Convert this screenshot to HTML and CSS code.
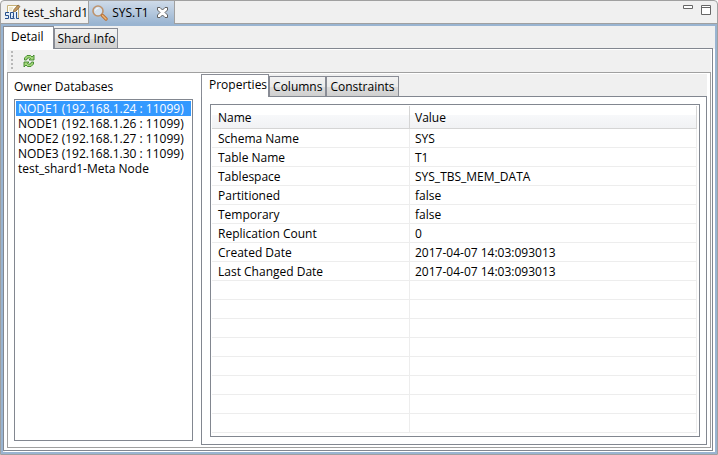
FILE: index.html
```html
<!DOCTYPE html>
<html lang="en">
<head>
<meta charset="utf-8">
<title>SYS.T1</title>
<link rel="stylesheet" href="styles.css">
</head>
<body>
<main class="editor">
  <header class="editor-tabs">
    <button class="editor-tab">
      <svg class="icon" width="16" height="16" viewBox="0 0 16 16" aria-hidden="true">
        <path d="M2.500 1.500h11v13h-11z" fill="#fffdf2" stroke="#c5b078"/>
        <path d="M4 4h4M4 6h3" stroke="#e0d4ae"/>
        <path d="M13 1l2 1.500-4 4.500-3 1.500 1-3z" fill="#c99a5c" stroke="#7d6340" stroke-width=".8"/>
        <path d="M0 8h13v7H0z" fill="#e4eef8"/>
        <path d="M4 8.500H.5v3h3v3H0M5.500 8.500h3v6h-3zM7.500 12.500l2 2.500M11.500 8v6.500H14" fill="none" stroke="#28508c"/>
      </svg>
      <span>test_shard1</span>
    </button>
    <button class="editor-tab editor-tab-active">
      <svg class="icon" width="16" height="16" viewBox="0 0 16 16" aria-hidden="true">
        <circle cx="6" cy="6" r="5" fill="#d3e0ee" stroke="#bd936e" stroke-width="1.600"/>
        <path d="M3.500 5.500a3 3 0 0 1 3-2.500" fill="none" stroke="#fff"/>
        <path d="M10.500 10.500l3.500 3.500" stroke="#b8733a" stroke-width="3.400" stroke-linecap="round"/>
        <path d="M10.500 10.500l3.500 3.500" stroke="#f0b878" stroke-width="1.400" stroke-linecap="round"/>
      </svg>
      <span>SYS.T1</span>
      <svg class="close" width="11" height="11" viewBox="0 0 11 11" aria-hidden="true">
        <path d="M.5 .5h2.500l2.500 2.500L8 .5h2.500V3L8 5.500 10.500 8v2.500H8L5.500 8 3 10.500H.5V8L3 5.500.5 3z" fill="#fff" stroke="#606060"/>
      </svg>
    </button>
    <div class="window-buttons">
      <button aria-label="Minimize"><svg width="10" height="10" viewBox="0 0 10 10"><path d="M.5 .5h9v3h-9z" fill="#fff" stroke="#666"/></svg></button>
      <button aria-label="Maximize"><svg width="10" height="10" viewBox="0 0 10 10"><path d="M.5 .5h9v9h-9zM0 2.500h10" fill="#fff" stroke="#666"/></svg></button>
    </div>
  </header>
  <div class="frame">
    <nav class="tabs">
      <button class="tab tab-active tab-wide">Detail</button>
      <button class="tab">Shard Info</button>
    </nav>
    <section class="page">
      <div class="toolbar">
        <span class="grip"></span>
        <button aria-label="Refresh">
          <svg width="12" height="14" viewBox="0 0 12 14">
            <path d="M1.500 6V4L4 1.500h3.500L9 3l2-2v5H6l1.500-1.500L6.500 4h-2L3.500 6z" fill="#a4d87c" stroke="#3d8527" stroke-width=".9"/>
            <path d="M10.500 8v2L8 12.500H4.500L3 11l-2 2V8h5L4.500 9.500l1 .5h2l1-2z" fill="#a4d87c" stroke="#3d8527" stroke-width=".9"/>
          </svg>
        </button>
      </div>
      <div class="content">
        <section class="owners">
          <h2 id="owners-title">Owner Databases</h2>
          <ul class="list" role="listbox" aria-labelledby="owners-title">
            <li role="option" aria-selected="true">NODE1 (192.168.1.24 : 11099)</li>
            <li role="option">NODE1 (192.168.1.26 : 11099)</li>
            <li role="option">NODE2 (192.168.1.27 : 11099)</li>
            <li role="option">NODE3 (192.168.1.30 : 11099)</li>
            <li role="option">test_shard1-Meta Node</li>
          </ul>
        </section>
        <section class="details">
          <nav class="tabs tabs-spaced">
            <button class="tab tab-active">Properties</button>
            <button class="tab">Columns</button>
            <button class="tab">Constraints</button>
          </nav>
          <div class="details-page">
            <div class="grid">
              <table>
                <colgroup><col class="name-col"><col></colgroup>
                <thead><tr><th>Name</th><th>Value</th></tr></thead>
                <tbody>
                  <tr><td>Schema Name</td><td>SYS</td></tr>
                  <tr><td>Table Name</td><td>T1</td></tr>
                  <tr><td>Tablespace</td><td>SYS_TBS_MEM_DATA</td></tr>
                  <tr><td>Partitioned</td><td>false</td></tr>
                  <tr><td>Temporary</td><td>false</td></tr>
                  <tr><td>Replication Count</td><td>0</td></tr>
                  <tr><td>Created Date</td><td>2017-04-07 14:03:093013</td></tr>
                  <tr><td>Last Changed Date</td><td>2017-04-07 14:03:093013</td></tr>
                  <tr><td></td><td></td></tr>
                  <tr><td></td><td></td></tr>
                  <tr><td></td><td></td></tr>
                  <tr><td></td><td></td></tr>
                  <tr><td></td><td></td></tr>
                  <tr><td></td><td></td></tr>
                  <tr><td></td><td></td></tr>
                  <tr><td></td><td></td></tr>
                </tbody>
              </table>
            </div>
          </div>
        </section>
      </div>
    </section>
  </div>
</main>
</body>
</html>
```

FILE: styles.css
```css
* { box-sizing: border-box; }

body {
  margin: 0;
  background: #fff;
  color: #000;
  font: 12px/15px "Open Sans", "Noto Sans", sans-serif;
}

button {
  border: 0;
  padding: 0;
  background: none;
  color: inherit;
  font: inherit;
  white-space: nowrap;
}

svg { display: block; }

.icon { flex: none; }

.editor {
  display: flex;
  flex-direction: column;
  min-height: 100vh;
  border: 1px solid #a0a0a0;
  border-radius: 4px 4px 0 0;
  background: #f0f0f0;
}

.editor-tabs {
  display: flex;
  height: 23px;
  border-bottom: 1px solid #a0a0a0;
}

.editor-tab {
  display: flex;
  align-items: center;
  padding: 0 0 0 4px;
  gap: 2px;
  border-right: 1px solid #a0a0a0;
}

.editor-tab-active {
  height: 23px;
  padding: 0 6px 0 3px;
  gap: 4px;
  background: linear-gradient(#cfdbe9, #99b4d1);
}

.close { margin-left: 4px; }

.window-buttons {
  display: flex;
  align-items: flex-start;
  gap: 8px;
  margin-left: auto;
  padding: 4px 6px;
}

.frame {
  flex: 1;
  display: flex;
  flex-direction: column;
  border: 2px solid #99b4d1;
  background: #f0f0f0;
}

.tabs {
  display: flex;
  align-items: flex-end;
}

.tab {
  height: 20px;
  padding: 0 2px;
  border: 1px solid #898c95;
  border-bottom: 0;
  background: linear-gradient(#f2f2f2, #ebebeb 50%, #dddddd 51%, #cfcfcf);
}

.tabs-spaced .tab { padding: 0 3px; }

.tab-active,
.tabs-spaced .tab-active {
  height: 23px;
  margin-bottom: -1px;
  padding: 0 1px 3px 7px;
  position: relative;
  background: #fff;
}

.tab-wide { padding-right: 10px; }

.page {
  flex: 1;
  display: flex;
  flex-direction: column;
  margin-right: 2px;
  margin-bottom: 1px;
  padding: 1px 1px 2px 3px;
  border: 1px solid #828790;
  background: #fff;
  box-shadow: 2px 1px #fff;
}

.toolbar {
  display: flex;
  align-items: center;
  gap: 10px;
  height: 22px;
  padding-left: 4px;
  background: #f0f0f0;
}

.grip {
  width: 2px;
  height: 20px;
  background: repeating-linear-gradient(#b8b8b8 0 2px, #f0f0f0 2px 4px);
}

.content {
  flex: 1;
  display: flex;
  gap: 8px;
  padding: 1px 3px 2px 6px;
  border: 1px solid #a0a0a0;
  background: #fff;
}

.owners {
  display: flex;
  flex-direction: column;
  flex: 0 0 179px;
  padding-bottom: 4px;
}

h2 {
  margin: 0;
  padding: 5px 0;
  font: inherit;
}

.list {
  flex: 1;
  margin: 0;
  padding: 1px;
  border: 1px solid #828790;
  list-style: none;
}

.list li {
  padding-left: 2px;
  white-space: nowrap;
}

.list [aria-selected="true"] {
  background: #3399ff;
  color: #fff;
}

.details {
  flex: 1;
  display: flex;
  flex-direction: column;
  background: linear-gradient(#f0f0f0 0 22px, #fff 22px);
}

.details-page {
  flex: 1;
  padding: 7px 6px 7px 8px;
  border: 1px solid #828790;
  background: #fff;
}

.grid {
  height: 100%;
  padding: 1px 2px 1px 1px;
  border: 1px solid #828790;
}

table {
  width: 100%;
  border-collapse: separate;
  border-spacing: 0;
  table-layout: fixed;
}

.name-col { width: 198px; }

th, td {
  height: 19px;
  padding: 0 5px 0 6px;
  border-right: 1px solid #ededed;
  border-bottom: 1px solid #ededed;
  font-weight: normal;
  text-align: left;
}

th + th, td + td { padding-left: 5px; }

th {
  height: 23px;
  border-color: #d5d5d5;
  background: linear-gradient(#fff 40%, #f7f8fa 41%, #f1f2f4);
}
```
